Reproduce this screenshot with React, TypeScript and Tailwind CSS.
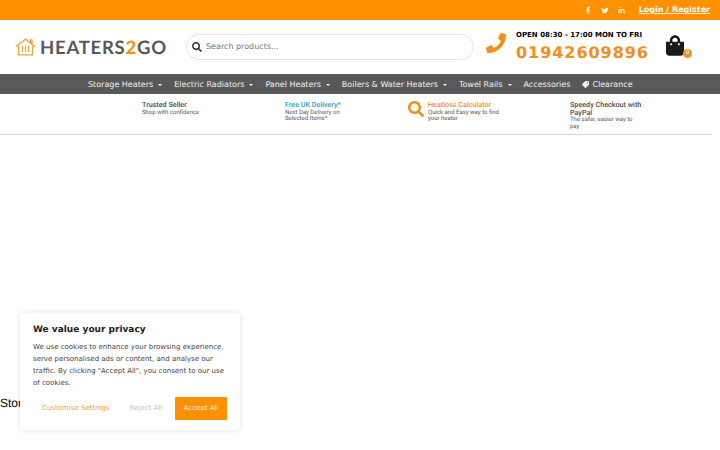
import { FaFacebookF, FaTwitter, FaLinkedinIn, FaPhone, FaSearch, FaTag, FaShoppingBag } from "react-icons/fa";

const dj = "font-['DejaVu_Sans',sans-serif]";
const rb = "font-['Roboto',sans-serif]";

function Caret() {
  return <span className="ml-[5px] inline-block w-0 h-0 border-x-[2px] border-x-transparent border-t-[2.5px] border-t-white" />;
}

function NavItem({ label, caret, icon }: { label: string; caret?: boolean; icon?: boolean }) {
  return (
    <span className="flex items-center whitespace-nowrap">
      {icon && <FaTag className="mr-[3px] w-[7px] h-[7px] scale-x-[-1]" />}
      {label}
      {caret && <Caret />}
    </span>
  );
}

function Feature({ title, color, lines, w, icon }: { title: string[]; color: string; lines: string[]; w: string; icon?: boolean }) {
  return (
    <div className={`flex shrink-0 pt-[7px] ${w}`}>
      {icon && <FaSearch className="text-[#f28f1c] w-[16px] h-[16px] mr-[4px]" />}
      <div className={rb}>
        {title.map((t) => (
          <div key={t} className={`text-[7.2px] leading-[7.5px] font-medium whitespace-nowrap ${color}`}>{t}</div>
        ))}
        <div className="mt-[1px]">
          {lines.map((t) => (
            <div key={t} className="text-[6px] leading-[6.5px] text-[#555555] whitespace-nowrap">{t}</div>
          ))}
        </div>
      </div>
    </div>
  );
}

export default function App() {
  return (
    <div className={`relative w-[720px] h-[450px] overflow-hidden bg-white antialiased [text-rendering:geometricPrecision] ${dj}`}>
      <div className="h-[20px] bg-[#ff9000] flex items-center justify-end text-white pr-[10px]">
        <div className="flex items-center">
          <FaFacebookF className="w-[6px] h-[7px] mr-[10px]" />
          <FaTwitter className="w-[8px] h-[7px] mr-[9px]" />
          <FaLinkedinIn className="w-[7px] h-[7px] mr-[14px]" />
          <span className="text-[8px] font-bold underline">Login / Register</span>
        </div>
      </div>

      <div className="h-[54px] flex items-center">
        <div className="ml-[15px] w-[171px] shrink-0 flex items-center">
          <svg width="21" height="18" viewBox="0 0 21 18" fill="none" stroke="#f0a33e" strokeWidth="1.3">
            <path d="M0.8 8.8 L10.5 1.2 L20.2 8.8" />
            <path d="M3.5 7.5 V16.8 H17.5 V7.5" />
            <path d="M15.5 4.8 V1.8 H17 V6" />
            <path d="M7.5 8 V14 M10.5 8 V14 M13.5 8 V14" strokeWidth="1.1" />
          </svg>
          <span className="ml-[4px] font-['Lato',sans-serif] text-[18.5px] leading-none font-bold tracking-[0.75px] text-[#58595b]">
            HEATERS<span className="text-[#f0931e] font-black">2</span>GO
          </span>
        </div>
        <div className="w-[288px] h-[26px] shrink-0 rounded-full border border-[#e4e4e4] flex items-center pl-[5px]">
          <FaSearch className="w-[10px] h-[10px] text-[#333333]" />
          <span className="ml-[4px] text-[8px] text-[#777777]">Search products...</span>
        </div>
        <FaPhone className="ml-[12px] w-[20px] h-[20px] text-[#f28f1c] -mt-[9px]" />
        <div className="ml-[10px] w-[150px] shrink-0 -mt-[1px]">
          <div className="text-[7px] leading-[9px] font-bold text-black whitespace-nowrap">OPEN 08:30 - 17:00 MON TO FRI</div>
          <div className="mt-[3px] text-[16px] leading-[19px] font-bold text-[#f28f1c] tracking-[0.95px]">01942609896</div>
        </div>
        <div className="relative mt-[-3px]">
          <FaShoppingBag className="w-[18px] h-[21px] text-[#1a1a1a]" />
          <span className="absolute -right-[8px] bottom-[-2px] w-[9px] h-[9px] rounded-full bg-[#f28f1c] text-white text-[5.5px] flex items-center justify-center">0</span>
        </div>
      </div>

      <div className="h-[20px] bg-[#595959] flex items-center pl-[88px] pt-[1px] gap-[12px] text-[8px] text-[#f0f0f0]">
        <NavItem label="Storage Heaters" caret />
        <NavItem label="Electric Radiators" caret />
        <NavItem label="Panel Heaters" caret />
        <NavItem label="Boilers & Water Heaters" caret />
        <NavItem label="Towel Rails" caret />
        <NavItem label="Accessories" />
        <NavItem label="Clearance" icon />
      </div>

      <div className="w-[712px] h-[41px] border-b border-[#d4d4d4] flex pl-[142px]">
        <Feature w="w-[143px]" title={["Trusted Seller"]} color="text-[#4a4a4a]" lines={["Shop with confidence"]} />
        <Feature w="w-[123px]" title={["Free UK Delivery*"]} color="text-[#1f9fd0]" lines={["Next Day Delivery on", "Selected Items*"]} />
        <Feature w="w-[162px]" icon title={["Heatloss Calculator"]} color="text-[#f28f1c]" lines={["Quick and Easy way to find", "your heater"]} />
        <Feature w="w-[80px]" title={["Speedy Checkout with", "PayPal"]} color="text-[#4a4a4a]" lines={["The safer, easier way to", "pay"]} />
      </div>

      <div className="pt-[261px] font-['Liberation_Sans',sans-serif] text-[12px] leading-[14px] font-medium text-black">Storage Heaters</div>

      <div className="absolute left-[20px] top-[313px] w-[220px] h-[117px] bg-white rounded-[4px] shadow-[0_0_6px_rgba(0,0,0,0.12)] px-[13px] pt-[10px]">
        <div className="pt-[1px] text-[9px] leading-[12px] font-bold text-[#222222]">We value your privacy</div>
        <p className="mt-[5px] text-[7px] leading-[12px] text-[#444444]">
          We use cookies to enhance your browsing experience, serve personalised ads or content, and analyse our traffic. By clicking "Accept All", you consent to our use of cookies.
        </p>
        <div className="mt-[8px] flex items-center text-[7px] whitespace-nowrap">
          <span className="ml-[9px] text-[#f0a33e]">Customise Settings</span>
          <span className="ml-[20px] text-[#c4c4c4]">Reject All</span>
          <span className="ml-[13px] w-[52px] h-[23px] bg-[#ff9000] text-[#fff3e0] rounded-[1px] flex items-center justify-center">Accept All</span>
        </div>
      </div>
    </div>
  );
}
